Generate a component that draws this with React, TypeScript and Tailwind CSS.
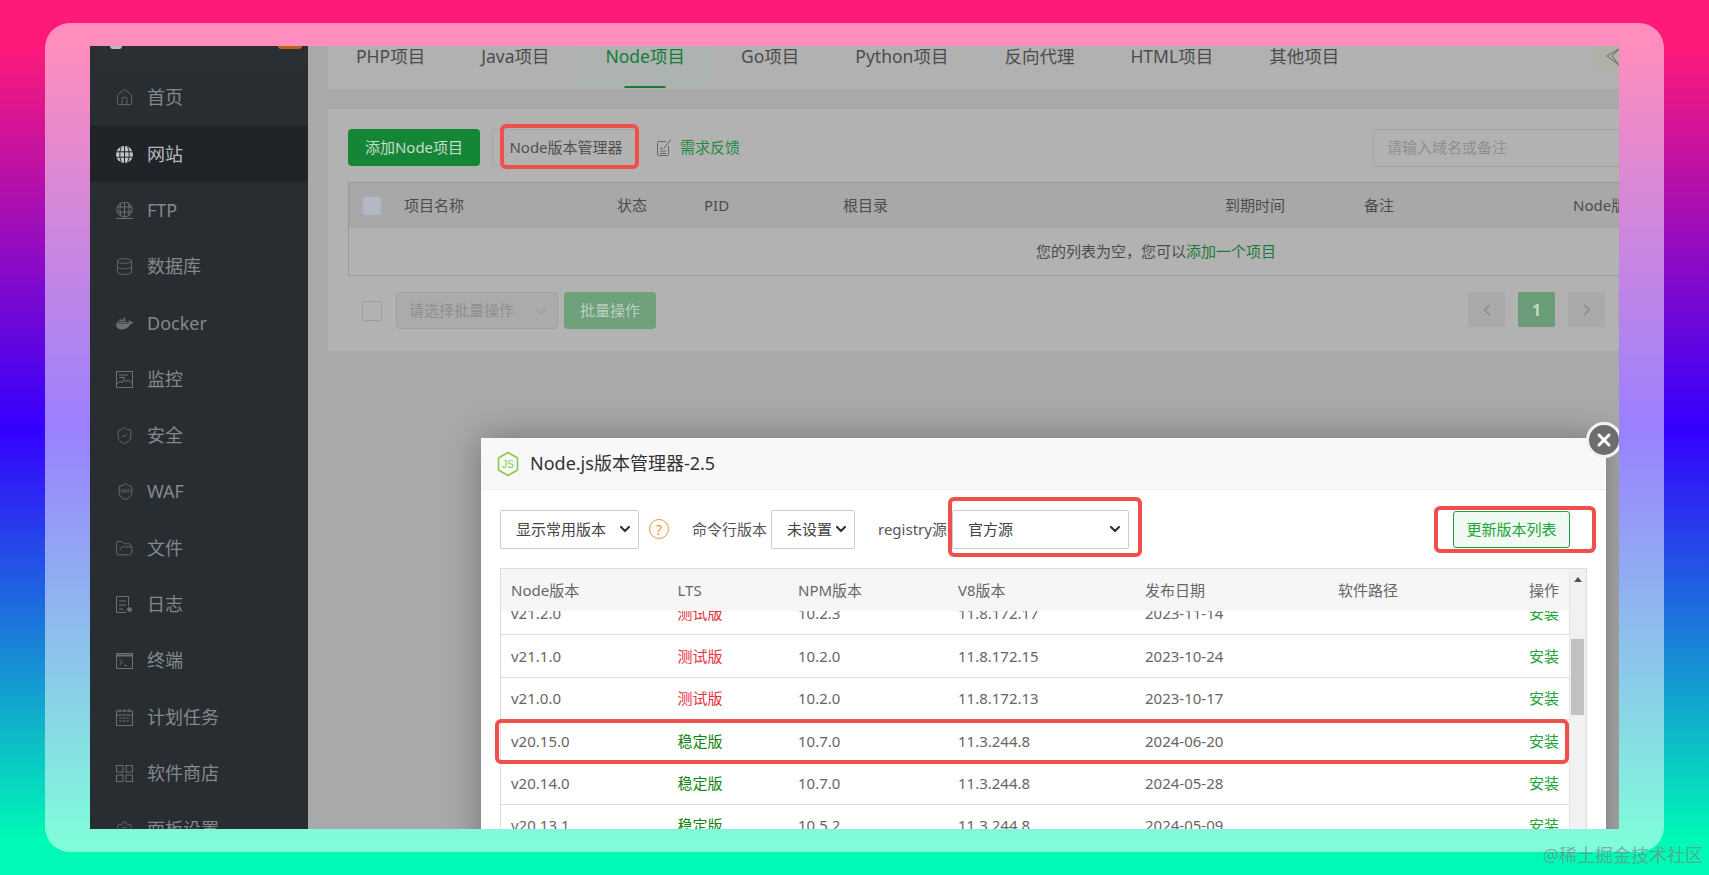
import React from 'react';
import { House, Database, ShieldCheck, Shield, FolderOpen, Settings, ChevronDown, ChevronLeft, ChevronRight, X } from 'lucide-react';
import { FaDocker } from 'react-icons/fa';

const FONT = "font-['Noto_Sans','Noto_Sans_CJK_SC',sans-serif]";

// sidebar icons lucide has no close match for
const SolidGlobe = () => (
  <svg width="17" height="17" viewBox="0 0 17 17" fill="none">
    <circle cx="8.5" cy="8.5" r="8.5" fill="currentColor" />
    <path d="M0 5.800h17M0 11.200h17M8.500 0v17M5.300 1c-2 4.500-2 10.500 0 15M11.700 1c2 4.500 2 10.500 0 15" stroke="#202429" strokeWidth="1" />
  </svg>
);
const FtpGlobe = () => (
  <svg width="17" height="17" viewBox="0 0 17 17" fill="none" stroke="currentColor" strokeWidth="1">
    <circle cx="8.500" cy="7.500" r="7.500" />
    <path d="M1 5h15M1 10h15M8.500 0v15M5 1c-1.500 4-1.500 9 0 13M12 1c1.500 4 1.500 9 0 13M0 16.500h17" />
  </svg>
);
const ChartBox = () => (
  <svg width="17" height="17" viewBox="0 0 17 17" fill="none" stroke="currentColor" strokeWidth="1">
    <rect x="0.5" y="0.500" width="16" height="16" />
    <path d="M3 4h9M3 6.500h6M1 13l3-3 2 2 2-4 2 3 2-2 4 3" />
  </svg>
);
const LogIcon = () => (
  <svg width="17" height="17" viewBox="0 0 17 17" fill="none" stroke="currentColor" strokeWidth="1">
    <path d="M12.500 10V.5H.5v16H10M3 5h7M3 9h7M3 13h4" />
    <circle cx="13.500" cy="13.500" r="2" fill="currentColor" />
  </svg>
);
const TermIcon = () => (
  <svg width="17" height="16" viewBox="0 0 17 16" fill="none" stroke="currentColor" strokeWidth="1">
    <rect x="0.5" y="0.500" width="16" height="15" />
    <path d="M.5 2.500h16" strokeWidth="2" />
    <path d="M3.500 7l3 2.500-3 2.500M8 12.500h3" />
  </svg>
);
const CalIcon = () => (
  <svg width="17" height="17" viewBox="0 0 17 17" fill="none" stroke="currentColor" strokeWidth="1">
    <rect x="0.5" y="2" width="16" height="14.500" />
    <path d="M4 0v3M8.500 0v3M13 0v3M.5 6h16" />
    <path d="M3 9h11M3 12h11" strokeDasharray="2.500 1" />
  </svg>
);
const StoreIcon = () => (
  <svg width="17" height="17" viewBox="0 0 17 17" fill="none" stroke="currentColor" strokeWidth="1">
    <rect x="0.5" y="0.500" width="6.500" height="6.500" />
    <rect x="10" y="0.500" width="6.500" height="6.500" />
    <rect x="0.5" y="10" width="6.500" height="6.500" />
    <rect x="10" y="10" width="6.500" height="6.500" />
  </svg>
);
const WafIcon = () => (
  <span className="relative flex h-[19px] w-[19px] items-center justify-center">
    <Shield size={19} strokeWidth={1.2} />
    <span className="absolute text-[5px] leading-none">WAF</span>
  </span>
);
const NoteIcon = () => (
  <svg width="15" height="18" viewBox="0 0 15 18" fill="none" stroke="currentColor" strokeWidth="1" className="text-[#666]">
    <path d="M9 2.500H1.500a1 1 0 0 0-1 1v12a1 1 0 0 0 1 1h9a1 1 0 0 0 1-1V7" />
    <path d="M7 9l6.500-8M3 9.500h3M3 12h6M3 14.500h6" />
  </svg>
);

const lucideProps = { size: 19, strokeWidth: 1.1, className: '-ml-[1px]' };

const menu: { label: string; icon: React.ReactNode; active?: boolean }[] = [
  { label: '首页', icon: <House {...lucideProps} /> },
  { label: '网站', icon: <SolidGlobe />, active: true },
  { label: 'FTP', icon: <FtpGlobe /> },
  { label: '数据库', icon: <Database {...lucideProps} /> },
  { label: 'Docker', icon: <FaDocker size={17} /> },
  { label: '监控', icon: <ChartBox /> },
  { label: '安全', icon: <ShieldCheck {...lucideProps} /> },
  { label: 'WAF', icon: <WafIcon /> },
  { label: '文件', icon: <FolderOpen {...lucideProps} /> },
  { label: '日志', icon: <LogIcon /> },
  { label: '终端', icon: <TermIcon /> },
  { label: '计划任务', icon: <CalIcon /> },
  { label: '软件商店', icon: <StoreIcon /> },
  { label: '面板设置', icon: <Settings {...lucideProps} /> },
];

const tabs = ['PHP项目', 'Java项目', 'Node项目', 'Go项目', 'Python项目', '反向代理', 'HTML项目', '其他项目'];

const versions = [
  { v: 'v21.2.0', lts: '测试版', npm: '10.2.3', v8: '11.8.172.17', date: '2023-11-14' },
  { v: 'v21.1.0', lts: '测试版', npm: '10.2.0', v8: '11.8.172.15', date: '2023-10-24' },
  { v: 'v21.0.0', lts: '测试版', npm: '10.2.0', v8: '11.8.172.13', date: '2023-10-17' },
  { v: 'v20.15.0', lts: '稳定版', npm: '10.7.0', v8: '11.3.244.8', date: '2024-06-20', marked: true },
  { v: 'v20.14.0', lts: '稳定版', npm: '10.7.0', v8: '11.3.244.8', date: '2024-05-28' },
  { v: 'v20.13.1', lts: '稳定版', npm: '10.5.2', v8: '11.3.244.8', date: '2024-05-09' },
];

const VERSION_COLS = 'grid grid-cols-[166.5px_120.5px_160px_187px_193px_191px_1fr] pl-[10px]';

const Mark = ({ className }: { className: string }) => (
  <div className={`pointer-events-none absolute rounded-[6px] border-4 border-[#ef504c] ${className}`} />
);

const Picker = ({ text, className }: { text: string; className: string }) => (
  <div className={`flex h-[39px] shrink-0 items-center justify-between rounded-[2px] border border-[#ccc] bg-white pl-[15px] pr-[5px] text-[15px] text-[#444] ${className}`}>
    <span>{text}</span>
    <ChevronDown size={16} strokeWidth={3.2} className="text-[#333]" />
  </div>
);

const Sidebar = () => (
  <aside className="w-[218px] shrink-0 bg-[#282d32]">
    <div className="relative h-[23.7px] bg-[#2a2f34]">
      <div className="absolute left-[20px] top-0 h-[3px] w-[12px] rounded-b-full bg-[#b9b9b9]" />
      <div className="absolute left-[188px] top-0 h-[3px] w-[24px] rounded-b bg-[#b8641e]" />
    </div>
    {menu.map(item => (
      <div
        key={item.label}
        className={`flex h-[56.3px] items-center pl-[26px] text-[18px] ${item.active ? 'bg-[#202429] text-[#b9b9b9]' : 'text-[#85888b]'}`}
      >
        <span className={`flex w-[31px] shrink-0 ${item.active ? 'text-[#c4c4c4]' : 'text-[#6c7075]'}`}>{item.icon}</span>
        <span>{item.label}</span>
      </div>
    ))}
  </aside>
);

const TabBar = () => (
  <div className="relative flex h-[43px] bg-[#b1b1b1] text-[17.5px] text-[#4c4c4c]">
    {tabs.map(tab => (
      <div key={tab} className={`relative h-full px-[28px] ${tab === 'Node项目' ? 'bg-[#adb3ae] text-[#157a38]' : ''}`}>
        <span className="block leading-[20px]">{tab}</span>
        {tab === 'Node项目' && <span className="absolute bottom-[1px] left-1/2 h-[2px] w-[41px] -translate-x-1/2 bg-[#157a38]" />}
      </div>
    ))}
    <div className="absolute right-0 top-0 flex h-[22px] w-[27px] items-center justify-end bg-[#b1b0a6] text-[#666]">
      <svg width="13" height="20" viewBox="0 0 13 20" fill="none" stroke="currentColor" strokeWidth="1">
        <path d="M13 2L6 9l7 9M13 2L1 9l12 9" />
      </svg>
    </div>
  </div>
);

const ProjectTable = () => (
  <div className="mt-[16px] w-[1616px] border border-[#999]">
    <div className="flex h-[45px] items-center bg-[#a8a8a8] text-[15px] text-[#4c4c4c]">
      <div className="w-[55px] shrink-0 pl-[13px]">
        <div className="h-[20px] w-[20px] rounded-[3px] border border-[#a4a8b4] bg-[#b4b8c4]" />
      </div>
      <span className="w-[213px] shrink-0">项目名称</span>
      <span className="w-[87px] shrink-0">状态</span>
      <span className="w-[139px] shrink-0">PID</span>
      <span className="w-[382px] shrink-0">根目录</span>
      <span className="w-[139px] shrink-0">到期时间</span>
      <span className="w-[209px] shrink-0">备注</span>
      <span>Node版本</span>
    </div>
    <div className="flex h-[47px] items-center justify-center text-[15px] text-[#4c4c4c]">
      您的列表为空，您可以<span className="text-[#1b7a3a]">添加一个项目</span>
    </div>
  </div>
);

const Pager = () => (
  <div className="absolute left-[1120px] top-0 flex gap-[13px]">
    <div className="flex h-[35px] w-[37px] items-center justify-center bg-[#a9a9a9] text-[#8a8a8a]"><ChevronLeft size={18} /></div>
    <div className="flex h-[35px] w-[37px] items-center justify-center rounded-[2px] bg-[#6a9c77] text-[16px] font-bold text-[#c4d6c8]">1</div>
    <div className="flex h-[35px] w-[37px] items-center justify-center bg-[#a9a9a9] text-[#8a8a8a]"><ChevronRight size={18} /></div>
    <div className="h-[35px] w-[37px] bg-[#a9a9a9]" />
  </div>
);

const ProjectPanel = () => (
  <div className="mt-[20px] w-[1656px] bg-[#b2b2b2] pb-[22px] pl-[20px] pt-[20px]">
    <div className="flex h-[37px] items-center text-[15px]">
      <div className="flex h-full w-[132px] items-center justify-center rounded-[4px] bg-[#148636] text-[#c8dccc]">添加Node项目</div>
      <div className="relative ml-[12px] flex h-full w-[146px] items-center justify-center rounded-[3px] border border-[#a6a6a6] pl-[2px] text-[#505050]">
        Node版本管理器
        <Mark className="-bottom-[4px] -right-[2px] -top-[6px] left-[7px]" />
      </div>
      <span className="ml-[19px]"><NoteIcon /></span>
      <span className="ml-[8px] text-[#1f8a42]">需求反馈</span>
      <div className="ml-[633px] flex h-[38px] w-[400px] items-center rounded-[4px] border border-[#a3a3a3] pl-[13px] text-[#8f8f8f]">请输入域名或备注</div>
    </div>
    <ProjectTable />
    <div className="relative mt-[16px] flex h-[37px] items-center text-[15px]">
      <div className="ml-[14px] h-[20px] w-[20px] rounded-[3px] border border-[#9c9c9c]" />
      <div className="ml-[14px] flex h-full w-[162px] items-center justify-between rounded-[4px] border border-[#a0a0a0] bg-[#ababab] pl-[12px] pr-[6px] text-[#8e8e8e]">
        <span>请选择批量操作</span>
        <ChevronDown size={20} strokeWidth={1.1} />
      </div>
      <div className="ml-[6px] flex h-full w-[92px] items-center justify-center rounded-[4px] bg-[#6f9f7b] text-[#bad0c0]">批量操作</div>
      <Pager />
    </div>
  </div>
);

const VersionTable = () => (
  <div className="mx-[19px] flex h-[300px] border-x border-t border-[#ddd] text-[15px] text-[#666]">
    <div className="-ml-[6px] min-w-0 flex-1 overflow-hidden pl-[6px]">
      <div className={`${VERSION_COLS} relative z-10 h-[42px] items-center bg-[#f6f6f6]`}>
        <span>Node版本</span><span>LTS</span><span>NPM版本</span><span>V8版本</span><span>发布日期</span><span>软件路径</span><span>操作</span>
      </div>
      <div className="-mt-[18px]">
        {versions.map(r => (
          <div key={r.v} className={`${VERSION_COLS} relative h-[42.4px] items-center border-b border-[#ddd]`}>
            <span>{r.v}</span>
            <span className={r.lts === '稳定版' ? 'text-[#128412]' : 'text-[#e8313c]'}>{r.lts}</span>
            <span>{r.npm}</span>
            <span>{r.v8}</span>
            <span>{r.date}</span>
            <span />
            <span className="text-[#20a53a]">安装</span>
            {r.marked && <Mark className="-bottom-[2px] -left-[6px] -top-[1px] right-0" />}
          </div>
        ))}
      </div>
    </div>
    <div className="relative w-[17px] shrink-0 border-l border-[#e4e4e4] bg-[#f1f1f1]">
      <div className="absolute left-[4px] top-[8px] h-0 w-0 border-x-[4px] border-b-[5px] border-x-transparent border-b-[#505050]" />
      <div className="absolute left-[1px] top-[70px] h-[76px] w-[13px] bg-[#c1c1c1]" />
    </div>
  </div>
);

const VersionModal = () => (
  <div className="absolute left-[391px] top-[392px] h-[500px] w-[1125px] bg-white shadow-[0_0_34px_rgba(0,0,0,0.32)]">
    <div className="flex h-[52px] items-center border-b border-[#eee] bg-[#f8f8f8] pl-[15px] text-[18px] text-[#333]">
      <svg width="24" height="26" viewBox="0 0 24 26" fill="none">
        <path d="M12 1.500l9.500 5.500v12L12 24.500 2.500 19V7z" stroke="#8cc84b" strokeWidth="1.600" />
        <text x="12" y="17" textAnchor="middle" fontSize="10" fill="#8cc84b" fontFamily="Liberation Sans, sans-serif">JS</text>
      </svg>
      <span className="ml-[10px]">Node.js版本管理器-2.5</span>
    </div>
    <div className="flex h-[78px] items-center pl-[19px] pr-[36px] text-[15px] text-[#555]">
      <Picker text="显示常用版本" className="w-[139px]" />
      <span className="ml-[10px] flex h-[20px] w-[20px] shrink-0 items-center justify-center rounded-full border-[1.5px] border-[#e8983a] text-[14px] text-[#e8983a]">?</span>
      <span className="ml-[23px]">命令行版本</span>
      <Picker text="未设置" className="ml-[4px] w-[84px]" />
      <span className="ml-[23px]">registry源</span>
      <div className="relative ml-[5px]">
        <Picker text="官方源" className="w-[177px]" />
        <Mark className="-bottom-[8px] -left-[4px] -right-[13px] -top-[13px]" />
      </div>
      <div className="relative ml-auto">
        <div className="flex h-[37px] w-[117px] items-center justify-center rounded-[3px] border border-[#20a53a] bg-[#f0f9f2] text-[#20a53a]">更新版本列表</div>
        <Mark className="-bottom-[5px] -left-[19px] -right-[26px] -top-[5px]" />
      </div>
    </div>
    <VersionTable />
    <div className="absolute -top-[16px] left-[1105px] flex h-[36px] w-[36px] items-center justify-center rounded-full border-[3px] border-[#f2f2f2] bg-[#6d6d6d] text-white">
      <X size={20} strokeWidth={3.5} />
    </div>
  </div>
);

export default function App() {
  return (
    <div className={`relative h-[875px] w-[1709px] overflow-hidden bg-[linear-gradient(180deg,#ff1a7a_5%,#3400ff_49%,#00f9b5_96%)] p-[23px_45px] ${FONT}`}>
      <div className="h-full w-full rounded-[25px] bg-white/50 p-[23px_45px]">
        <div className="relative flex h-full w-full overflow-hidden">
          <Sidebar />
          <main className="min-w-0 flex-1 bg-[#a9a9a9] pl-[20px]">
            <TabBar />
            <ProjectPanel />
          </main>
          <VersionModal />
        </div>
      </div>
      <span className="absolute bottom-[6px] right-[6px] text-[18px] text-[#6b8f86]/70">@稀土掘金技术社区</span>
    </div>
  );
}
